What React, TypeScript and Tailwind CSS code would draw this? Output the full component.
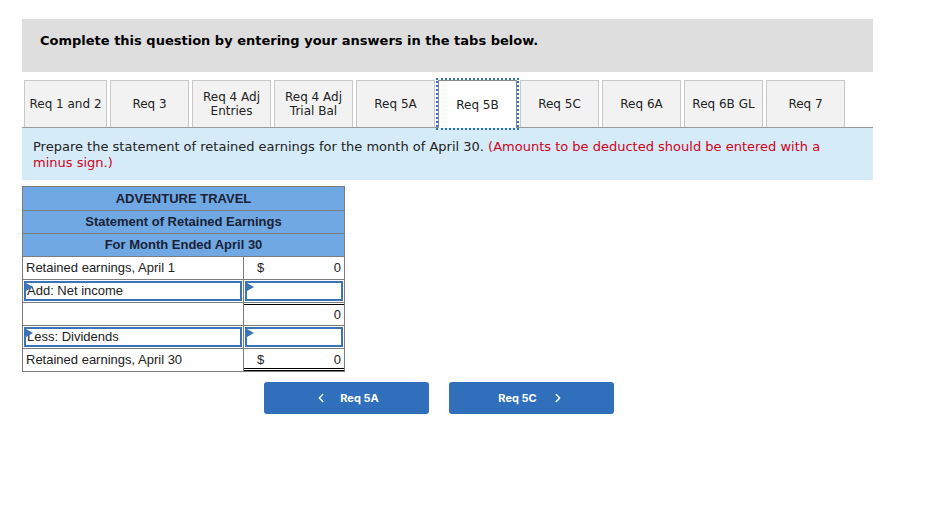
import { ChevronLeft, ChevronRight } from "lucide-react";

const tabs = [
  { label: "Req 1 and 2", w: "w-[83px]" },
  { label: "Req 3" },
  { label: "Req 4 Adj Entries", lines: ["Req 4 Adj", "Entries"] },
  { label: "Req 4 Adj Trial Bal", lines: ["Req 4 Adj", "Trial Bal"] },
  { label: "Req 5A" },
  { label: "Req 5B", active: true },
  { label: "Req 5C" },
  { label: "Req 6A" },
  { label: "Req 6B GL" },
  { label: "Req 7" },
];

function Marker() {
  return (
    <span className="absolute left-0 top-0 h-0 w-0 border-y-[4px] border-l-[7px] border-y-transparent border-l-[#3b73b9]" />
  );
}

function InputCell({ text }: { text?: string }) {
  return (
    <div className="relative h-full border-2 border-[#3b73b9] bg-white pl-[1px] leading-[16px]">
      <Marker />
      {text}
    </div>
  );
}

export default function App() {
  return (
    <div className="min-h-[532px] bg-white pl-[22px] pt-[19px] font-['DejaVu_Sans',Verdana,sans-serif] text-[#222]">
      <div className="w-[851px]">
        {/* Header */}
        <div className="h-[53px] bg-[#dedede] pl-[18px] pt-[14px] text-[13px] leading-[16px] font-bold text-black">
          Complete this question by entering your answers in the tabs below.
        </div>

        {/* Tabs */}
        <div className="mt-[8px] flex gap-[3px] border-b border-[#9a9a9a] pl-[2px]">
          {tabs.map((t) =>
            t.active ? (
              <div
                key={t.label}
                className="-mb-px flex h-[48px] w-[79px] items-center justify-center border border-b-0 border-[#8a8a8a] bg-white text-[12px] outline-2 outline-dotted outline-[#2f72c4]"
              >
                {t.label}
              </div>
            ) : (
              <div
                key={t.label}
                className={`flex h-[47px] ${t.w ?? "w-[79px]"} flex-col items-center justify-center border border-b-0 border-[#c8c8c8] bg-[#f2f2f2] text-[12px] leading-[14px]`}
              >
                {t.lines ? t.lines.map((l) => <span key={l}>{l}</span>) : t.label}
              </div>
            )
          )}
        </div>

        {/* Instruction */}
        <div className="bg-[#d6ebf8] px-[11px] pb-[9px] pt-[11px] text-[13px] leading-[16px] text-[#222]">
          Prepare the statement of retained earnings for the month of April 30.{" "}
          <span className="text-[#d0021b]">
            (Amounts to be deducted should be entered with a minus sign.)
          </span>
        </div>

        {/* Statement */}
        <div className="mt-[6px] w-[323px] border border-[#7d7d7d] font-['Liberation_Sans',Arial,sans-serif] text-[13px] text-[#222]">
          {["ADVENTURE TRAVEL", "Statement of Retained Earnings", "For Month Ended April 30"].map(
            (h, i) => (
              <div
                key={h}
                className={`flex h-[23px] items-center justify-center bg-[#6fa8e3] font-bold text-[#1a2236] ${
                  i > 0 ? "border-t border-[#7d7d7d]" : ""
                }`}
              >
                {h}
              </div>
            )
          )}

          <div className="grid grid-cols-[221px_1fr] border-t border-[#7d7d7d]">
            {/* Row 1 */}
            <div className="flex h-[22px] items-center border-r border-[#7d7d7d] pl-[3px]">
              Retained earnings, April 1
            </div>
            <div className="flex h-[22px] items-center justify-between pl-[13px] pr-[3px]">
              <span>$</span>
              <span>0</span>
            </div>

            {/* Row 2 */}
            <div className="h-[23px] border-r border-t border-[#7d7d7d] p-[1px]">
              <InputCell text="Add: Net income" />
            </div>
            <div className="h-[23px] border-t border-[#7d7d7d] p-[1px]">
              <InputCell />
            </div>

            {/* Row 3 */}
            <div className="h-[23px] border-r border-t border-[#7d7d7d]" />
            <div className="border-t border-[#7d7d7d] pt-[1px]">
              <div className="flex h-[21px] items-center justify-end border-t border-black pr-[3px]">
                0
              </div>
            </div>

            {/* Row 4 */}
            <div className="h-[23px] border-r border-t border-[#7d7d7d] p-[1px]">
              <InputCell text="Less: Dividends" />
            </div>
            <div className="h-[23px] border-t border-[#7d7d7d] p-[1px]">
              <InputCell />
            </div>

            {/* Row 5 */}
            <div className="flex h-[23px] items-center border-r border-t border-[#7d7d7d] pl-[3px]">
              Retained earnings, April 30
            </div>
            <div className="h-[23px] border-t border-[#7d7d7d]">
              <div className="flex h-[22px] items-center justify-between border-b-[3px] border-double border-black pl-[13px] pr-[3px] pt-[2px]">
                <span>$</span>
                <span>0</span>
              </div>
            </div>
          </div>
        </div>

        {/* Nav buttons */}
        <div className="mt-[10px] flex gap-[20px] pl-[242px] font-['Inter',sans-serif] text-[11px] font-bold text-white">
          <button className="flex h-[32px] w-[165px] items-center justify-center gap-[12px] rounded-[3px] bg-[#2f6fbc]">
            <ChevronLeft size={14} strokeWidth={2.5} />
            <span>Req 5A</span>
          </button>
          <button className="flex h-[32px] w-[165px] items-center justify-center gap-[14px] rounded-[3px] bg-[#2f6fbc]">
            <span>Req 5C</span>
            <ChevronRight size={14} strokeWidth={2.5} />
          </button>
        </div>
      </div>
    </div>
  );
}
